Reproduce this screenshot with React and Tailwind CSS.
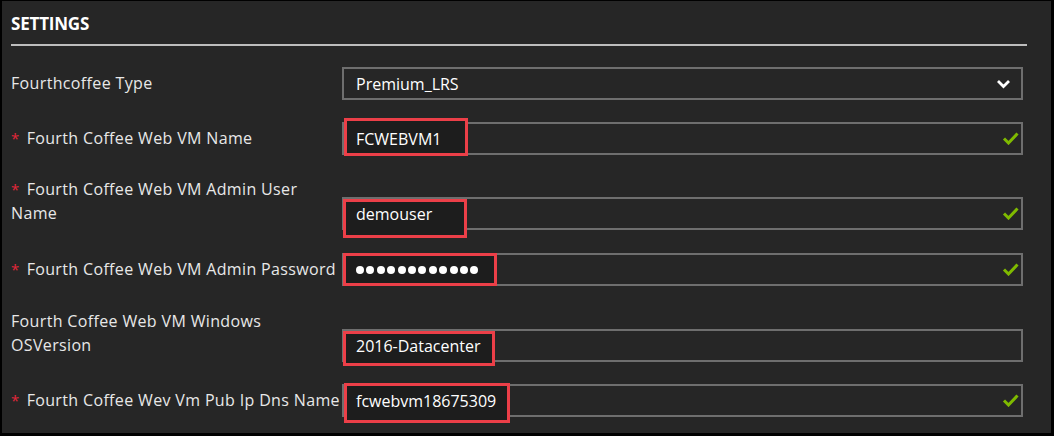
import React from "react";

const font = { fontFamily: '"Open Sans", "Noto Sans", sans-serif' };

function Check() {
  return (
    <svg width="17" height="13" viewBox="0 0 17 13" className="absolute right-[2px] top-[8px]">
      <polyline points="2,6.5 6.5,11 15.5,1.5" fill="none" stroke="#7fba00" strokeWidth="3" />
    </svg>
  );
}

function Chevron() {
  return (
    <svg width="15" height="10" viewBox="0 0 15 10" className="absolute right-[10px] top-[10px]">
      <polyline points="2,2 7.5,7.5 13,2" fill="none" stroke="#ffffff" strokeWidth="2.8" />
    </svg>
  );
}

function Label({ required, children, twoLine }) {
  return (
    <div
      className={
        "w-[331px] shrink-0 mb-[5px] text-[16px] leading-[24px] tracking-[0.35px] text-[#e8e8e8] " +
        (twoLine ? "" : "whitespace-nowrap")
      }
    >
      {required && <span className="text-[#e3273a] mr-[7px] text-[15px]">*</span>}
      {children}
    </div>
  );
}

function Field({ children, box, check, chevron }) {
  return (
    <div className="relative flex-1 mr-[4px] h-[33px] border-2 border-[#6e6e6e] flex items-center pl-[12px] text-[16px] text-white">
      {box && <div className={box}></div>}
      <div className="relative">{children}</div>
      {check && <Check />}
      {chevron && <Chevron />}
    </div>
  );
}

function Dots() {
  const dots = [];
  for (let i = 0; i < 12; i++) {
    dots.push(<div key={i} className="w-[8px] h-[8px] rounded-full bg-white"></div>);
  }
  return <div className="flex gap-[2.4px] pt-[1px]">{dots}</div>;
}

export default function App() {
  return (
    <div className="w-[1054px] h-[436px] bg-black" style={font}>
      <div className="h-full border-t-[1px] border-l-2 border-r-[3px] border-b-[3px] border-black bg-[#262626] pl-[9px] pr-[24px] pt-[12px]">
        <div className="text-[17px] font-bold leading-[22px] text-white tracking-[-0.2px]">SETTINGS</div>
        <div className="mt-[9px] h-[2px] bg-[#bdbdbd]"></div>

        <div className="flex flex-col gap-[22px] mt-[21px]">
          <div className="flex items-end">
            <Label>Fourthcoffee Type</Label>
            <Field chevron>Premium_LRS</Field>
          </div>

          <div className="flex items-end">
            <Label required>Fourth Coffee Web VM Name</Label>
            <Field check box="absolute left-[0px] top-[-6px] w-[124px] h-[38px] border-[3px] border-[#ec3f48] bg-[#1d1d1d]">
              FCWEBVM1
            </Field>
          </div>

          <div className="flex items-end">
            <Label required twoLine>
              Fourth Coffee Web VM Admin User
              <br />
              Name
            </Label>
            <Field check box="absolute left-[-1px] top-[0px] w-[124px] h-[39px] border-[3px] border-[#ec3f48] bg-[#1d1d1d]">
              demouser
            </Field>
          </div>

          <div className="flex items-end pt-[1px]">
            <Label required>Fourth Coffee Web VM Admin Password</Label>
            <Field check box="absolute left-[-1px] top-[-2px] w-[154px] h-[33px] border-[3px] border-[#ec3f48] bg-[#1d1d1d]">
              <Dots />
            </Field>
          </div>

          <div className="flex items-end pt-[1px]">
            <Label twoLine>
              Fourth Coffee Web VM Windows
              <br />
              OSVersion
            </Label>
            <Field box="absolute left-[-1px] top-[0px] w-[152px] h-[35px] border-[3px] border-[#ec3f48] bg-[#1d1d1d]">
              2016-Datacenter
            </Field>
          </div>

          <div className="flex items-end">
            <Label required>Fourth Coffee Wev Vm Pub Ip Dns Name</Label>
            <Field check box="absolute left-[0px] top-[-3px] w-[166px] h-[40px] border-[3px] border-[#ec3f48] bg-[#1d1d1d]">
              fcwebvm18675309
            </Field>
          </div>
        </div>
      </div>
    </div>
  );
}
